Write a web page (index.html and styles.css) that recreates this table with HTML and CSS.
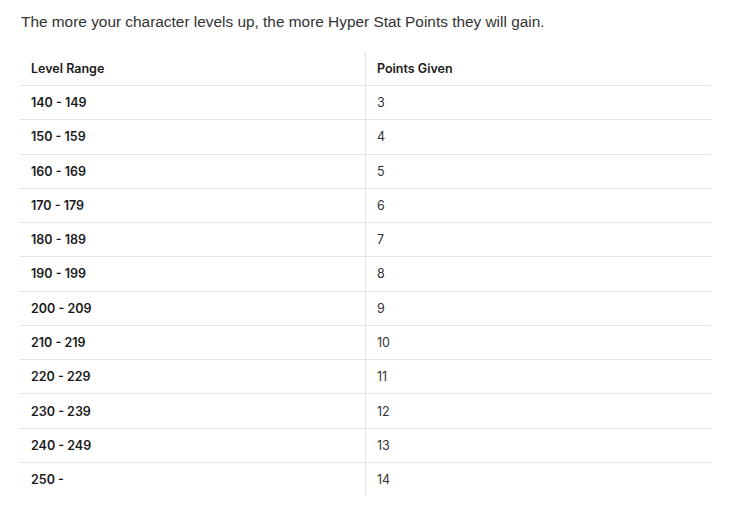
FILE: index.html
```html
<!DOCTYPE html>
<html>
<head>
<meta charset="utf-8">
<link rel="stylesheet" href="styles.css">
</head>
<body>
<div class="page">
  <p class="intro">The more your character levels up, the more Hyper Stat Points they will gain.</p>
  <table class="points">
    <thead>
      <tr><th>Level Range</th><th>Points Given</th></tr>
    </thead>
    <tbody>
      <tr><td class="lv">140 - 149</td><td>3</td></tr>
      <tr><td class="lv">150 - 159</td><td>4</td></tr>
      <tr><td class="lv">160 - 169</td><td>5</td></tr>
      <tr><td class="lv">170 - 179</td><td>6</td></tr>
      <tr><td class="lv">180 - 189</td><td>7</td></tr>
      <tr><td class="lv">190 - 199</td><td>8</td></tr>
      <tr><td class="lv">200 - 209</td><td>9</td></tr>
      <tr><td class="lv">210 - 219</td><td>10</td></tr>
      <tr><td class="lv">220 - 229</td><td>11</td></tr>
      <tr><td class="lv">230 - 239</td><td>12</td></tr>
      <tr><td class="lv">240 - 249</td><td>13</td></tr>
      <tr><td class="lv">250 -</td><td>14</td></tr>
    </tbody>
  </table>
</div>
</body>
</html>
```

FILE: styles.css
```css
html, body {
  margin: 0;
  padding: 0;
  background: #ffffff;
}
.page {
  padding: 12px 28px 0 20px;
}
.intro {
  margin: 0 0 20px 1px;
  font-family: "Liberation Sans", Arial, sans-serif;
  font-size: 15.4px;
  line-height: 20px;
  color: #333333;
}
.points {
  width: 691px;
  border-collapse: collapse;
  table-layout: fixed;
  font-family: Inter, "Noto Sans", sans-serif;
  font-size: 12.5px;
  color: #1a1a1a;
}
.points th,
.points td {
  text-align: left;
  padding: 0 11px;
  height: 33.27px;
  border-bottom: 1px solid #e4e3ea;
  vertical-align: middle;
}
.points th {
  font-weight: 600;
  height: 33px;
}
.points th:first-child,
.points td:first-child {
  border-right: 1px solid #e4e3ea;
}
.points tbody tr:last-child td {
  border-bottom: none;
}
.points td.lv {
  font-weight: 600;
}
.points td:not(.lv) {
  color: #333333;
}
```
